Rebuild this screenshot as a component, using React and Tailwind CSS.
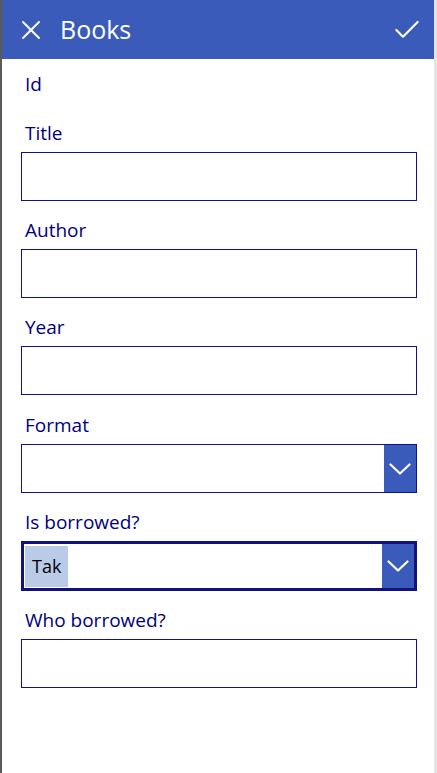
import { X, Check } from "lucide-react";

function Field({ label, children }) {
  return (
    <div className="flex flex-col">
      <label className="h-[20px] pl-[23px] text-[19px] leading-[20px] text-[#00007f]">{label}</label>
      {children}
    </div>
  );
}

function TextBox() {
  return <div className="ml-[19px] mr-[17px] mt-[9px] h-[49px] border-[1.5px] border-[#11118a] bg-white" />;
}

function Chevron() {
  return (
    <svg width="22" height="12" viewBox="0 0 22 12" fill="none">
      <polyline points="1.5,1.5 11,10.5 20.5,1.5" stroke="white" strokeWidth="2.2" strokeLinecap="round" strokeLinejoin="round" />
    </svg>
  );
}

function Dropdown({ value, focused }) {
  return (
    <div
      className={
        "ml-[19px] mr-[17px] mt-[9px] flex bg-white " +
        (focused ? "h-[50px] border-[3px] border-[#11117f]" : "h-[49px] border-[1.5px] border-[#11118a]")
      }
    >
      <div className="flex flex-1 items-center pl-[1px]">
        {value && (
          <span className="flex h-full max-h-[41px] items-center bg-[#b9cbe6] px-[7px] text-[18px] text-black">
            {value}
          </span>
        )}
      </div>
      <div className="flex w-[32px] items-center justify-center bg-[#3a5bb9]">
        <Chevron />
      </div>
    </div>
  );
}

export default function App() {
  return (
    <div
      className="flex h-[773px] w-[437px] flex-col border-l-2 border-r-[3px] border-l-[#5a5a5a] border-r-[#e4e4e4] bg-white"
      style={{ fontFamily: '"Open Sans", "Noto Sans", sans-serif' }}
    >
      <header className="flex h-[59px] items-center bg-[#3a5bb9] text-white">
        <X className="ml-[13px] h-[32px] w-[32px]" strokeWidth={1.4} />
        <h1 className="ml-[13px] text-[25px] leading-none">Books</h1>
        <Check className="ml-auto mr-[11px] h-[32px] w-[32px]" strokeWidth={1.6} />
      </header>

      <main className="flex flex-col pt-[15px]">
        <div className="pl-[23px] text-[19px] leading-[20px] text-[#00007f]">Id</div>
        <div className="mt-[29px] flex flex-col gap-[19px]">
          <Field label="Title">
            <TextBox />
          </Field>
          <Field label="Author">
            <TextBox />
          </Field>
          <Field label="Year">
            <TextBox />
          </Field>
          <div className="mt-[1px]">
            <Field label="Format">
              <Dropdown />
            </Field>
          </div>
          <Field label="Is borrowed?">
            <Dropdown value="Tak" focused />
          </Field>
          <Field label="Who borrowed?">
            <TextBox />
          </Field>
        </div>
      </main>
    </div>
  );
}
